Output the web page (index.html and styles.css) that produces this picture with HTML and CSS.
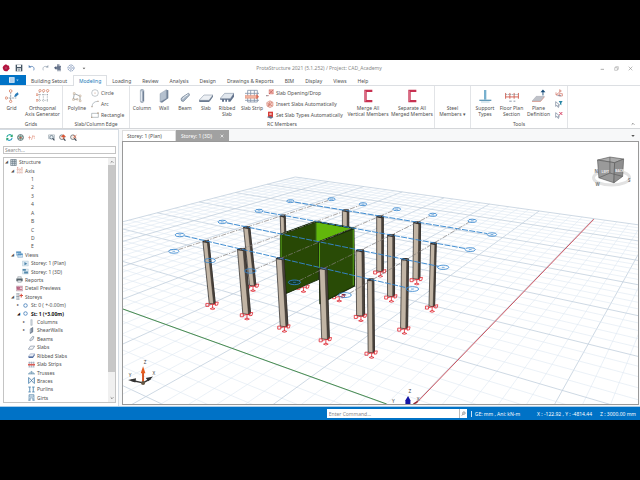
FILE: index.html
```html
<!DOCTYPE html>
<html lang="en">
<head>
<meta charset="utf-8">
<title>ProtaStructure 2021</title>
<link rel="stylesheet" href="styles.css">
</head>
<body>
<div class="app">
  <header class="titlebar">
    <div class="quick">
      <button aria-label="Application"><svg viewBox="0 0 24 24"><path fill="#b5123e" d="M12 1l4 3 5 1 1 6 1 3-4 4-3 4-5 0-5-2-3-5-1-5 3-5 4-3z"/><circle cx="12" cy="12" r="4" fill="#7c0828"/><path d="M12 8v8M8 12h8" stroke="#e0658b" stroke-width="2"/></svg></button>
      <button aria-label="Save"><svg viewBox="0 0 24 24"><path d="M2 2h20v20H2z" fill="#455564"/><path d="M6 2h12v7H6zM6 13h12v9H6z" fill="#f3f6f8"/><path d="M8 16h8M8 19h8" stroke="#455564" stroke-width="1.5"/></svg></button>
      <button aria-label="Undo"><svg viewBox="0 0 24 24"><path d="M6 9c7-5 15 1 11 10" fill="none" stroke="#5480b5" stroke-width="2.5"/><path d="M2 11V3l8 7z" fill="#5480b5"/></svg></button>
      <button aria-label="Redo"><svg viewBox="0 0 24 24"><path d="M18 9C11 4 3 10 7 19" fill="none" stroke="#9aa6b4" stroke-width="2.2"/><path d="M22 11V3l-8 7z" fill="#9aa6b4"/></svg></button>
      <button aria-label="Building"><svg viewBox="0 0 24 24"><path d="M9 3h8M9 8h12M10 17h10M12 2v20M18 5v17" fill="none" stroke="#52617c" stroke-width="2.5"/><path d="M0 11l7-5v4h12v4H7v4z" fill="#52617c"/></svg></button>
      <button aria-label="Settings"><svg viewBox="0 0 24 24"><circle cx="12" cy="12" r="9" fill="none" stroke="#7d93b6" stroke-width="3" stroke-dasharray="5 1.5"/><circle cx="12" cy="12" r="4" fill="none" stroke="#7d93b6" stroke-width="2"/></svg></button>
      <button aria-label="Customize"><svg viewBox="0 0 24 24"><path d="M8 11h8l-4 5z" fill="#555"/></svg></button>
    </div>
    <h1>ProtaStructure 2021 (5.1.252) / Project: CAD_Academy</h1>
    <div class="window">
      <button aria-label="Minimize"><svg viewBox="0 0 15 15"><path d="M2 10h10" stroke="#888" stroke-width="2"/></svg></button>
      <button aria-label="Restore"><svg viewBox="0 0 15 15"><path d="M2 5h8v8H2zM5 5V2h8v8h-3" fill="none" stroke="#999" stroke-width="1.5"/></svg></button>
      <button aria-label="Close"><svg viewBox="0 0 15 15"><path d="M2 2l11 11M13 2L2 13" stroke="#888" stroke-width="1.7"/></svg></button>
    </div>
  </header>

  <nav class="tabs">
    <button class="file" aria-label="File"><svg viewBox="0 0 30 20"><path d="M5 3h14v14H5z" fill="#e5f1fb"/><path d="M7 7h10M7 10h10M7 13h10" stroke="#5b9bd5" stroke-width="1.3"/><path d="M23 9h6l-3 4z" fill="#9cc8ee"/></svg></button>
    <button>Building Setout</button><button class="active">Modeling</button><button>Loading</button><button>Review</button><button>Analysis</button><button>Design</button><button>Drawings &amp; Reports</button><button>BIM</button><button>Display</button><button>Views</button><button>Help</button>
  </nav>

  <section class="ribbon">
    <div class="group">
      <div class="tools grids">
        <button><svg viewBox="0 0 42 42"><path d="M17 8v32M2 27h32" stroke="#6a7f90" stroke-width="2" stroke-dasharray="7 2"/><g fill="#fff" stroke="#dc8468" stroke-width="2.5"><circle cx="17" cy="6" r="4"/><circle cx="4" cy="27" r="3.5"/><circle cx="17" cy="37" r="3.5"/></g><path d="M27 23l4-8 7-5 3 6-8 7z" fill="#2b7cb9"/></svg><span>Grid</span></button>
        <button><svg viewBox="0 0 42 42"><path d="M10 8v30M22 8v30M34 8v30M4 17h34M4 34h34" stroke="#6d7b84" stroke-width="1.6" stroke-dasharray="4 3"/><g fill="#fff" stroke="#dc8468" stroke-width="2.4"><circle cx="12" cy="5" r="3.5"/><circle cx="23" cy="5" r="3.5"/><circle cx="35" cy="5" r="3.5"/><circle cx="3" cy="17" r="3"/><circle cx="3" cy="34" r="3"/></g></svg><span>Orthogonal<br>Axis Generator</span></button>
      </div>
      <h2>Grids</h2>
    </div>
    <div class="group">
      <div class="tools edges">
        <button><svg viewBox="0 0 42 42"><path d="M13 14l-3 17h13M13 14l17 7v16" fill="none" stroke="#75838d" stroke-width="2"/><g fill="#fff" stroke="#b69a7d" stroke-width="1.5"><path d="M10 11h5v5h-5zM8 29h5v5H8zM28 18h5v5h-5zM28 33h5v5h-5zM20 29h4v4h-4z"/></g></svg><span>Polyline</span></button>
        <div class="list">
          <button><svg viewBox="0 0 24 24"><circle cx="12" cy="12" r="10" fill="none" stroke="#8f9ba4" stroke-width="1.6"/><circle cx="12" cy="12" r="1.5" fill="#b87d61"/></svg>Circle</button>
          <button><svg viewBox="0 0 24 24"><path d="M3 20Q4 5 20 4" fill="none" stroke="#8f9ba4" stroke-width="1.8"/><path d="M1 18h4v4H1zM19 2h4v4h-4z" fill="#b9aa9b"/></svg>Arc</button>
          <button><svg viewBox="0 0 24 24"><path d="M2 7h20v12H2z" fill="none" stroke="#87939a" stroke-width="1.7"/><path d="M19 4h4v5h-4zM0 17h4v4H0z" fill="#bba58e"/></svg>Rectangle</button>
        </div>
      </div>
      <h2>Slab/Column Edge</h2>
    </div>
    <div class="group">
      <div class="tools members">
        <button><svg viewBox="0 0 42 42"><path d="M16 5q0-4 5-4t6 4v31q-1 5-6 5t-5-5z" fill="#aebac8" stroke="#68788b"/><path d="M19 7v29" stroke="#edf2f7" stroke-width="3"/><path d="M25 7v29" stroke="#69798e" stroke-width="3"/></svg><span>Column</span></button>
        <button><svg viewBox="0 0 42 42"><path d="M9 14L28 2v26L9 39z" fill="#b5c1cf" stroke="#718196"/><path d="M28 2l6 2v24L15 41l-6-2 19-11z" fill="#728399"/></svg><span>Wall</span></button>
        <button><svg viewBox="0 0 42 42"><path d="M9 30q1-4 8-8l14-9q4 0 3 6L17 37q-8 2-8-7z" fill="#a7b5c5" stroke="#68788c" stroke-width="2"/><path d="M13 31q3-7 18-15" fill="none" stroke="#eef3f8" stroke-width="3"/></svg><span>Beam</span></button>
        <button><svg viewBox="0 0 42 42"><path d="M0 34L15 18h27L30 34z" fill="#edf0f4" stroke="#758499" stroke-width="1.5"/><path d="M0 34h30v5H1zM30 34l12-16v5L31 39z" fill="#6c7b91"/></svg><span>Slab</span></button>
        <button><svg viewBox="0 0 42 42"><path d="M0 29L14 13h28L31 29z" fill="#e1e7ee" stroke="#718097" stroke-width="1.5"/><path d="M0 29h31l11-16v10L31 38h-6v-6h-4v6h-5v-6h-4v6H6v-6H1z" fill="#63738d"/></svg><span>Ribbed<br>Slab</span></button>
        <button><svg viewBox="0 0 42 42"><path d="M8 4h29v35H8zM17 4v35M28 4v35M0 13h42M0 34h42" fill="none" stroke="#8091a7" stroke-width="2.4"/><path d="M0 19h38v9H0z" fill="#f1b39f" stroke="#d77862"/><path d="M34 15l8 8-8 8z" fill="#d86b57"/></svg><span>Slab Strip</span></button>
        <div class="list">
          <button><svg viewBox="0 0 24 24"><path d="M9 2h13v13H9z" fill="#f4b1aa" stroke="#c7584f"/><path d="M9 15L22 2M11 4l9 9M2 20h7" stroke="#a4433e" stroke-width="1.4"/><path d="M1 18h3v4H1z" fill="#6e7780"/></svg>Slab Opening/Drop</button>
          <button><svg viewBox="0 0 24 24"><path d="M2 8l10-6 9 5v11l-9 5-9-5z" fill="#f4cdc4" stroke="#cd7565" stroke-width="1.5"/><path d="M5 10l14 8M12 5l-6 15M18 6L8 19" stroke="#c55d50" stroke-width="1.7"/></svg>Insert Slabs Automatically</button>
          <button><svg viewBox="0 0 24 24"><path d="M6 2h15v16H6z" fill="#d93d39"/><path d="M2 18l11-3 9 4-7 4z" fill="#65738a"/><path d="M10 6h7v6h-7z" fill="#eeb0a8"/></svg>Set Slab Types Automatically</button>
        </div>
        <button><svg viewBox="0 0 42 42"><path d="M34 2H10v38h24v-7H17V9h17z" fill="#c73151"/><path d="M13 5v32" stroke="#e79aaa" stroke-width="2"/></svg><span>Merge All<br>Vertical Members</span></button>
        <button><svg viewBox="0 0 42 42"><path d="M34 2H10v38h24v-7H17V9h17z" fill="#c73151"/><path d="M13 5v32" stroke="#e79aaa" stroke-width="2"/></svg><span>Separate All<br>Merged Members</span></button>
      </div>
      <h2>RC Members</h2>
    </div>
    <div class="group">
      <div class="tools steel"><button><svg viewBox="0 0 42 42"></svg><span>Steel<br>Members ▾</span></button></div>
      <h2>&nbsp;</h2>
    </div>
    <div class="group">
      <div class="tools misc">
        <button><svg viewBox="0 0 42 42"><path d="M18 3h7v29h-7z" fill="#77b0ce"/><path d="M4 32h36v4H4z" fill="#659bb9"/><path d="M9 39h26" stroke="#b8d3df" stroke-width="3"/></svg><span>Support<br>Types</span></button>
        <button><svg viewBox="0 0 46 42"><path d="M2 11v19M16 11v19M30 11v19M44 11v19M2 24h42" stroke="#d05d50" stroke-width="3"/><path d="M2 16h42" stroke="#7c858b" stroke-width="2" stroke-dasharray="5 2"/><path d="M14 38h8M28 38h6" stroke="#8290a5" stroke-width="3"/></svg><span>Floor Plan<br>Section</span></button>
        <button><svg viewBox="0 0 46 42"><path d="M0 38l14-16h27L28 38z" fill="#bfc2c9" stroke="#858b96"/><path d="M0 39h28l13-15" fill="none" stroke="#d98270" stroke-width="2"/><path d="M36 19V5" stroke="#174b78" stroke-width="3"/><path d="M28 9l8-9 8 9z" fill="#174b78"/></svg><span>Plane<br>Definition</span></button>
        <div class="list icons">
          <button aria-label="Rotate"><svg viewBox="0 0 24 24"><path d="M4 17l9-7M3 10v8h8M14 2l5 4-5 4zM13 14h9v7h-9z" fill="none" stroke="#cf6c5d" stroke-width="2"/><path d="M8 20h10" stroke="#5b789b" stroke-width="2"/></svg></button>
          <button aria-label="Filter"><svg viewBox="0 0 24 24"><path d="M2 5v14l4-3 3 6 3-1-3-6h5z" fill="#fff" stroke="#718096" stroke-width="2"/><path d="M11 3h12l-4 6v7l-4-3V9z" fill="#2786a5"/></svg></button>
          <button aria-label="Clear"><svg viewBox="0 0 24 24"><path d="M2 5v14l4-3 3 6 3-1-3-6h5z" fill="#fff" stroke="#718096" stroke-width="2"/><path d="M13 3l9 9M22 3l-9 9" stroke="#d74365" stroke-width="3"/></svg></button>
        </div>
      </div>
      <h2>Tools</h2>
    </div>
    <button class="collapse" aria-label="Collapse ribbon"><svg viewBox="0 0 12 12"><path d="M2 8l4-4 4 4" fill="none" stroke="#555" stroke-width="2"/></svg></button>
  </section>

  <main class="work">
    <aside class="side">
      <div class="sidebar-tools">
        <button aria-label="Refresh"><svg viewBox="0 0 24 24"><path d="M3 11C4 1 17 0 20 7" fill="none" stroke="#25a9a0" stroke-width="4"/><path d="M21 13c-1 10-14 11-17 4" fill="none" stroke="#2d9cc7" stroke-width="4"/><path d="M23 1v9h-9zM1 23v-9h9z" fill="#33a867"/></svg></button>
        <button aria-label="Globe"><svg viewBox="0 0 24 24"><circle cx="12" cy="12" r="10" fill="#dfece5" stroke="#55676f" stroke-width="3"/><path d="M12 3v18M3 9h18M3 15h18" stroke="#417863" stroke-width="1.8"/><path d="M8 10h8v5H8z" fill="#bc5b52"/></svg></button>
        <button aria-label="Sort"><svg viewBox="0 0 24 24"><path d="M5 6v13M1 12h9M12 20L17 4M18 8h6M20 14h4" stroke="#df8872" stroke-width="2.2"/></svg></button>
        <button class="apart" aria-label="Zoom window"><svg viewBox="0 0 24 24"><path d="M2 3h20v13H2z" fill="none" stroke="#8998a4" stroke-width="2"/><circle cx="12" cy="11" r="6" fill="#e9f0f5" stroke="#4e6677" stroke-width="2.5"/><path d="M16 15l6 7" stroke="#3d4c5a" stroke-width="4"/></svg></button>
        <button aria-label="Zoom in"><svg viewBox="0 0 24 24"><circle cx="10" cy="11" r="8" fill="#f5eee9" stroke="#59636c" stroke-width="2.5"/><path d="M15 15l7 8" stroke="#3d4650" stroke-width="4"/><path d="M15 3v14M9 9l6-6 7 6z" stroke="#da5534" stroke-width="3" fill="#da5534"/></svg></button>
        <button aria-label="Zoom clear"><svg viewBox="0 0 24 24"><circle cx="10" cy="11" r="8" fill="#f5eee9" stroke="#59636c" stroke-width="2.5"/><path d="M15 15l7 8" stroke="#3d4650" stroke-width="4"/><path d="M11 4l11 10M22 4L11 14" stroke="#dd7052" stroke-width="3"/></svg></button>
      </div>
      <input class="search" type="text" placeholder="Search..." aria-label="Search">
      <div class="tree">
        <ul>
          <li class="l1"><i>◢</i><svg viewBox="0 0 18 18"><path d="M2 1h14v16H2zM2 6h14M2 11h14M7 1v16M12 1v16" fill="#e3e9ee" stroke="#667582" stroke-width="1.8"/></svg>Structure</li>
          <li class="l2"><i>◢</i><svg viewBox="0 0 20 20"><path d="M5 4v15M11 4v15M17 4v15M2 7h17M2 15h17" stroke="#d08b79" stroke-width="1.7" stroke-dasharray="3 1.5"/><circle cx="5" cy="2" r="1.5" fill="#c8583f"/><circle cx="17" cy="2" r="1.5" fill="#c8583f"/></svg>Axis</li>
          <li class="l3"><i></i><b></b>1</li><li class="l3"><i></i><b></b>2</li><li class="l3"><i></i><b></b>3</li><li class="l3"><i></i><b></b>4</li>
          <li class="l3"><i></i><b></b>A</li><li class="l3"><i></i><b></b>B</li><li class="l3"><i></i><b></b>C</li><li class="l3"><i></i><b></b>D</li><li class="l3"><i></i><b></b>E</li>
          <li class="l2"><i>◢</i><svg viewBox="0 0 20 20"><path d="M1 2h13v10H1zM5 8h14v10H5z" fill="#cfe5f5" stroke="#6696bd" stroke-width="1.4"/><path d="M1 2h13v3H1zM5 8h14v3H5z" fill="#3c83b9"/></svg>Views</li>
          <li class="l3"><i></i><svg viewBox="0 0 20 20"><path d="M1 3h17v14H1z" fill="#dceaf3" stroke="#9bb3c6"/><path d="M7 6l8 5-8 4z" fill="#4c82a8"/></svg>Storey: 1 (Plan)</li>
          <li class="l3"><i></i><svg viewBox="0 0 20 20"><path d="M1 3h17v14H1z" fill="#dceaf3" stroke="#9bb3c6"/><path d="M2 3h9v5H2zM6 10h11v6H6z" fill="#5488aa"/></svg>Storey: 1 (3D)</li>
          <li class="l2"><i></i><svg viewBox="0 0 20 20"><path d="M1 7h18v8H1z" fill="#56636b"/><path d="M5 2h10v5H5zM5 12h10v6H5z" fill="#e5ebed" stroke="#56636b"/></svg>Reports</li>
          <li class="l2"><i></i><svg viewBox="0 0 20 20"><path d="M1 3h18v14H1z" fill="#edcdd5" stroke="#8b6f80"/><path d="M3 6h7v4H3zM12 6h5M3 13h14" stroke="#af496b" fill="#bc8ba6" stroke-width="2"/></svg>Detail Previews</li>
          <li class="l2"><i>◢</i><svg viewBox="0 0 20 20"><path d="M3 2v16M8 2v16M1 2h9M1 10h9M1 18h9" stroke="#778491" stroke-width="1.7"/><path d="M15 2v11M10 7h10" stroke="#d94e3f" stroke-width="3"/></svg>Storeys</li>
          <li class="l3"><i>▸</i><svg viewBox="0 0 20 20"><circle cx="10" cy="10" r="5" fill="none" stroke="#4d83bb" stroke-width="2.5"/></svg>St: 0 ( +-0.00m)</li>
          <li class="l3 strong"><i>◢</i><svg viewBox="0 0 20 20"><circle cx="10" cy="10" r="5" fill="none" stroke="#4d83bb" stroke-width="2.5"/></svg>St: 1 (+3.00m)</li>
          <li class="l4"><i>▸</i><svg viewBox="0 0 20 20"><path d="M8 2h4v16H8z" fill="#d9e0e7" stroke="#7b8896"/></svg>Columns</li>
          <li class="l4"><i>▸</i><svg viewBox="0 0 20 20"><path d="M6 6l8-5v13l-8 5z" fill="#738397" stroke="#56657a"/><path d="M8 6v9" stroke="#dce3ea" stroke-width="2"/></svg>ShearWalls</li>
          <li class="l4"><i></i><svg viewBox="0 0 20 20"><path d="M5 14l8-10 4 1-3 8-8 4z" fill="#e3e9ef" stroke="#67778c" stroke-width="1.6"/></svg>Beams</li>
          <li class="l4"><i></i><svg viewBox="0 0 20 20"><path d="M1 15L7 6h12l-6 9z" fill="#f6f8fa" stroke="#66778d" stroke-width="1.6"/></svg>Slabs</li>
          <li class="l4"><i></i><svg viewBox="0 0 20 20"><path d="M1 13L7 5h12l-5 8z" fill="#e6ebf3" stroke="#6074a0"/><path d="M1 13h13l5-8v5l-5 7H2z" fill="#526fa3"/></svg>Ribbed Slabs</li>
          <li class="l4"><i></i><svg viewBox="0 0 20 20"><path d="M4 2v16M10 2v16M16 2v16M1 4h18M1 17h18" stroke="#8397ae" stroke-width="1.5"/><path d="M0 8h20v5H0z" fill="#d85d56"/></svg>Slab Strips</li>
          <li class="l4"><i></i><svg viewBox="0 0 20 20"><path d="M1 14L10 7l9 7zM6 11v3M10 7v7M14 11v3" fill="none" stroke="#5e8caa" stroke-width="2"/></svg>Trusses</li>
          <li class="l4"><i></i><svg viewBox="0 0 20 20"><path d="M2 1v18M18 1v18" stroke="#5b8fb8" stroke-width="3"/><path d="M4 3l12 14M16 3L4 17" stroke="#3e6d96" stroke-width="2"/></svg>Braces</li>
          <li class="l4"><i></i><svg viewBox="0 0 20 20"><path d="M1 3h7M1 17h7M5 3v14M12 3h7M12 17h7M15 3v14" stroke="#4e86b1" stroke-width="2.5"/></svg>Purlins</li>
          <li class="l4"><i></i><svg viewBox="0 0 20 20"><path d="M3 18V2h14v16M3 6h14M6 18v-7h8v7M1 18h6M13 18h6" fill="none" stroke="#5184aa" stroke-width="2"/></svg>Girts</li>
        </ul>
        <div class="scroll"><button aria-label="Scroll up"><svg viewBox="0 0 12 12"><path d="M2 8l4-4 4 4" fill="none" stroke="#555" stroke-width="2"/></svg></button><div class="thumb"></div><button aria-label="Scroll down"><svg viewBox="0 0 12 12"><path d="M2 4l4 4 4-4" fill="none" stroke="#555" stroke-width="2"/></svg></button></div>
      </div>
    </aside>

    <section class="documents">
      <div class="doc-tabs">
        <button>Storey: 1 (Plan)</button>
        <button class="current"><span>Storey: 1 (3D)</span><svg viewBox="0 0 12 12"><path d="M2 2l8 8M10 2l-8 8" stroke="#fff" stroke-width="2"/></svg></button>
        <button class="more" aria-label="More documents"><svg viewBox="0 0 12 12"><path d="M1 3h10L6 9z" fill="#555"/></svg></button>
      </div>
      <div class="viewport">
        <svg id="scene" viewBox="9 39 1545 784" preserveAspectRatio="xMidYMid slice" role="img" aria-label="3D structure view">
          <g id="mesh"></g>
          <path d="M6 537L800 823" stroke="#338038" stroke-width="2.6"/>
          <path d="M1420 270L886 823" stroke="#c83b48" stroke-width="2.6"/>
          <g id="far"></g>
          <g stroke="#162808" stroke-width="3" stroke-linejoin="round">
            <path fill="#62b70b" d="M588 277L702 297L597 338L588 335z"/>
            <path fill="#284805" d="M482 316L588 277V336L597 338V450L500 492L482 455z"/>
            <path fill="#294b06" d="M597 338L702 297L704 470L600 523z"/>
          </g>
          <path d="M484 317V400M589 279V335M599 341V420M700 300V468" stroke="#59a719" stroke-width="3"/>
          <path d="M482 316L588 277L702 297L597 338" fill="none" stroke="#192c0b" stroke-width="5"/>
          <ellipse cx="524" cy="459" rx="18" ry="8" fill="#143c26"/>
          <g id="near"></g>
          <g id="axes" fill="none"></g>
          <g stroke-width="4">
            <path d="M71 758V720" stroke="#d65320" stroke-width="6"/><path d="M64 731L71 710L78 731z" fill="#e55a1b"/>
            <path d="M71 760L35 752M71 760L94 747" stroke="#343434"/><path d="M26 751L50 746L48 759zM101 741L79 745L87 755z" fill="#333"/><circle cx="71" cy="760" r="6" fill="#655744"/>
            <path d="M856 823V812L864 799L871 812V823z" fill="#1515a5"/><path d="M880 823L893 815" stroke="#8b2631"/>
          </g>
          <g class="axis-label"><text x="73" y="704">Z</text><text x="28" y="743">Y</text><text x="99" y="737">X</text><text x="865" y="791">Z</text><text x="816" y="821">Y</text><text x="890" y="814">X</text></g>
          <ellipse cx="1473" cy="146" rx="54" ry="22" fill="none" stroke="#e2e2e2" stroke-width="9"/>
          <g stroke="#5c5c5c" stroke-width="2"><path fill="#ababab" d="M1431 93L1468 84L1509 90L1482 101z"/><path fill="#9a9a9a" d="M1431 93L1482 101L1480 161L1435 146z"/><path fill="#8f8f8f" d="M1482 101L1509 90L1506 142L1480 161z"/><path fill="none" d="M1468 84V132L1435 146M1468 132L1506 142"/></g>
          <g class="cube-label"><text x="1443" y="132">LEFT</text><text x="1484" y="130">BACK</text></g>
          <g class="compass"><text x="1425" y="172">W</text><text x="1522" y="160">S</text><text x="1422" y="132">N</text></g>
        </svg>
      </div>
    </section>
  </main>

  <footer class="status">
    <div class="command"><input type="text" placeholder="Enter Command..." aria-label="Command"><button aria-label="Run command"><svg viewBox="0 0 12 12"><circle cx="7" cy="5" r="3" fill="none" stroke="#666" stroke-width="1.5"/><path d="M5 7l-3 4" stroke="#666" stroke-width="1.5"/></svg></button></div>
    <span class="units">GE: mm , Ani: kN-m</span><span class="xy">X : -122.92 , Y : -4814.44</span><span class="z">Z : 3000.00 mm</span>
  </footer>
</div>
<script src="scene.js"></script>
</body>
</html>
```

FILE: styles.css
```css
* { box-sizing: border-box; }
body { margin: 0; background: #000; font: 5px/6px "Noto Sans", sans-serif; color: #505050; }
button { border: 0; padding: 0; margin: 0; background: none; font: inherit; color: inherit; }
input { font: inherit; min-width: 0; border-radius: 0; }
input::placeholder { color: #888; }
svg { display: block; flex: none; }
h1, h2 { margin: 0; font: inherit; }
ul { list-style: none; margin: 0; padding: 0; }

.app { display: flex; flex-direction: column; min-height: 100vh; border: solid #000; border-width: 60px 0; background: #fff; }

.titlebar { display: grid; grid-template-columns: 1fr auto 1fr; align-items: center; height: 15px; padding: 1px 4px 0 2px; }
.titlebar h1 { color: #888; }
.quick { display: flex; gap: 5px; }
.quick svg { width: 8px; height: 8px; }
.window { display: flex; justify-content: flex-end; gap: 9px; padding-right: 3px; }
.window svg { width: 5px; height: 5px; }

.tabs { display: flex; height: 11px; border-bottom: 1px solid #dcdfe3; }
.tabs button { padding: 1px 6px 0 5px; }
.tabs .file { width: 26px; padding: 0 7px; background: #0072c6; }
.file svg { width: 12px; height: 8px; }
.tabs .active { color: #1979b8; background: #fff; border: 1px solid #dcdfe3; border-bottom: 0; padding: 0 5px; margin-bottom: -1px; }

.ribbon { display: flex; height: 43px; border-bottom: 1px solid #d4d6d9; }
.group { display: flex; flex-direction: column; justify-content: space-between; border-right: 1px solid #e2e4e7; padding-bottom: 1px; }
.group h2 { text-align: center; }
.tools { display: grid; align-items: start; }
.tools > button { display: flex; flex-direction: column; align-items: center; gap: 2px; padding-top: 3px; white-space: nowrap; }
.tools > button > svg { width: 14px; height: 14px; }
.tools > button > span { text-align: center; }
.grids { grid-template-columns: 23px 39px; }
.edges { grid-template-columns: 28px 38px; }
.members { grid-template-columns: 24px 20px 22px 20px 22px 28px 80px 44px 44px; }
.steel { grid-template-columns: 35px; }
.misc { grid-template-columns: 28px 25px 29px 14px; }
.list { display: grid; grid-auto-rows: 11px; padding-top: 1px; }
.list button { display: flex; align-items: center; gap: 2px; white-space: nowrap; }
.list svg { width: 8px; height: 8px; }
.icons { padding-left: 2px; }
.collapse { margin-left: auto; align-self: flex-end; padding: 0 5px 2px 0; }
.collapse svg, .more svg { width: 4px; height: 4px; }

.work { flex: 1; display: flex; background: #f7f8f9; }
.side { width: 119px; flex: none; display: flex; flex-direction: column; gap: 3px; padding: 1px 2px 3px 3px; border: 1px solid #d5dce3; border-width: 1px 1px 0 0; background: #fff; }
.sidebar-tools { display: flex; gap: 4px; height: 12px; align-items: center; padding-left: 3px; }
.sidebar-tools svg { width: 7px; height: 7px; }
.sidebar-tools .apart { margin-left: 9px; }
.search { width: 100%; height: 8px; border: 1px solid #c4c4c4; padding: 0 1px; }
.tree { flex: 1; display: flex; border: 1px solid #c4c4c4; }
.tree ul { flex: 1; display: grid; grid-auto-rows: 1fr; }
.tree li { display: flex; align-items: center; white-space: nowrap; }
.tree li i { width: 5px; flex: none; font: 4px/6px "DejaVu Sans", sans-serif; }
.tree li svg, .tree li b { width: 7px; height: 7px; flex: none; margin-right: 2px; }
.l1 { padding-left: 1px; }
.l2 { padding-left: 7px; }
.l3 { padding-left: 13px; }
.l4 { padding-left: 19px; }
.strong { font-weight: bold; color: #111; }
.scroll { width: 7px; display: grid; grid-template-rows: 7px 7fr 1fr; background: #f0f0f0; }
.scroll svg { width: 4px; height: 4px; margin: 0 auto; }
.scroll .thumb { background: #c7c7c7; }
.scroll button:last-child { align-self: end; padding-bottom: 2px; }

.documents { flex: 1; display: flex; flex-direction: column; padding: 1px 1px 1px 3px; }
.doc-tabs { display: flex; height: 11px; align-items: stretch; }
.doc-tabs button { width: 54px; padding: 0 4px; text-align: left; background: #fff; border: 1px solid #ddd; border-bottom: 0; }
.doc-tabs .current { display: flex; align-items: center; justify-content: space-between; width: 53px; background: #a1a1a1; border-color: #a1a1a1; color: #fff; }
.current svg { width: 4px; height: 4px; }
.doc-tabs .more { width: auto; margin-left: auto; background: none; border: 0; }
.viewport { flex: 1; min-height: 120px; border: 1px solid #999; background: #fff; overflow: hidden; display: flex; }
#scene { width: 100%; height: auto; flex: 1; }
.axis-label { font-size: 14px; fill: #444; }
.cube-label { font-size: 10px; font-weight: bold; fill: #eee; }
.compass { font-size: 13px; font-weight: bold; fill: #777; }

.status { display: flex; align-items: center; justify-content: flex-end; height: 14px; padding-right: 4px; background: #0072c6; border-top: 1px solid #a9cdea; color: #fff; }
.command { display: flex; width: 140px; height: 9px; margin-right: 4px; background: #fff; }
.command input { flex: 1; border: 0; padding: 0 2px; }
.command button { width: 8px; border-left: 1px solid #bbb; }
.command svg { width: 5px; height: 5px; margin: 0 auto; }
.status span { white-space: nowrap; }
.units { border-left: 1px solid #cce3f4; padding-left: 3px; margin-right: 17px; }
.xy { margin-right: 8px; }
```

FILE: scene.js
```js
const ns = 'http://www.w3.org/2000/svg';
function add(parent, tag, attrs) {
  const el = document.createElementNS(ns, tag);
  for (const k in attrs) el.setAttribute(k, attrs[k]);
  document.getElementById(parent).appendChild(el);
}

// Ground mesh in perspective: origin and the two vanishing points.
const O = [861, 846], VA = [1878, -207], VB = [-2097, -222];
const A = 1.216 / 35, B = 0.754 / 35;
function project(u, v) {
  const w = 1 + A * u + B * v;
  return [0, 1].map(i => ((O[i] + A * u * VA[i] + B * v * VB[i]) / w).toFixed(1));
}
function meshLine(p, q, major) {
  add('mesh', 'path', {
    d: 'M' + project(...p) + 'L' + project(...q),
    stroke: major ? '#c2cfdd' : '#dde8f2',
    'stroke-width': major ? 2.4 : 1.8
  });
}
for (let n = -35; n <= 35; n++) {
  const minV = Math.max(-35, (-0.85 - A * n) / B);
  const minU = Math.max(-35, (-0.85 - B * n) / A);
  meshLine([n, minV], [n, 35], n % 5 === 0);
  meshLine([minU, n], [35, n], n % 5 === 0);
}

function support(layer, x, y) {
  add(layer, 'path', {
    d: `M${x - 19} ${y - 2}h9v9h-9zM${x + 10} ${y - 5}l8-1-2 9-7 1zM${x - 10} ${y + 3}l11-3 9 1M${x + 1} ${y}v13M${x - 6} ${y + 14}q7-6 14 0q-7 5-14 0z`,
    fill: 'none', stroke: '#e0262f', 'stroke-width': 2.4
  });
}
function column(layer, x1, y1, x2, y2, w, foot = true) {
  const h = w / 2, s = w * 0.24;
  add(layer, 'path', { d: `M${x1 - h} ${y1}L${x1 + h} ${y1}L${x2 + h} ${y2 - 2}L${x2 + s} ${y2 + 2}L${x2 - h} ${y2}z`, fill: '#c2b5a5', stroke: '#1d1a18', 'stroke-width': 2 });
  add(layer, 'path', { d: `M${x1 + s} ${y1 + 4}L${x1 + h} ${y1}L${x2 + h} ${y2 - 2}L${x2 + s} ${y2 + 2}z`, fill: '#4d463f', stroke: '#1d1a18', 'stroke-width': 1.3 });
  add(layer, 'path', { d: `M${x1 - h} ${y1}L${x1 - h + 4} ${y1 - 4}H${x1 + h}V${y1 + 2}L${x1 + s} ${y1 + 5}L${x1 - h} ${y1 + 3}z`, fill: '#34302d' });
  if (foot) support(layer, x2, y2 + 2);
}
column('far', 489, 260, 491, 330, 15, false);
column('far', 677, 244, 677, 310, 19, false);
support('far', 550, 473);
support('far', 657, 501);
[
  [780, 262, 780, 425, 20], [891, 280, 889, 448, 21], [813, 318, 813, 500, 21],
  [940, 342, 935, 530, 17], [381, 294, 399, 468, 19], [259, 336, 278, 522, 18],
  [365, 360, 381, 553, 23], [720, 364, 722, 558, 24], [481, 387, 493, 590, 23],
  [855, 390, 852, 596, 21], [610, 417, 617, 628, 23], [752, 451, 754, 668, 19]
].forEach(c => column('near', ...c));
add('near', 'path', { d: 'M664 494h14l-6 6z', fill: '#8c2634' });

// Storey axes with their bubbles.
const ends = (x1, y1, x2, y2) => [[x1, y1], [x2, y2]].forEach(([x, y]) => {
  const r = 11 + (y - 210) / 35;
  add('axes', 'ellipse', { cx: x, cy: y, rx: r, ry: r * 0.38, stroke: '#3586cf', 'stroke-width': 2.5 });
  add('axes', 'path', { d: `M${x - 4} ${y}h8`, stroke: '#3586cf', 'stroke-width': 2 });
});
[[181, 317, 877, 479], [308, 278, 969, 414], [418, 245, 1050, 361], [512, 216, 1115, 316]].forEach(l => {
  add('axes', 'path', { d: `M${l[0] + 14} ${l[1] + 3}L${l[2] - 14} ${l[3] - 3}`, stroke: '#3586cf', 'stroke-width': 2.8, 'stroke-dasharray': '18 4' });
  ends(...l);
});
[[163, 366, 635, 210], [271, 394, 729, 225], [392, 425, 830, 240], [524, 459, 938, 257], [675, 497, 1056, 275]].forEach(l => {
  add('axes', 'path', { d: `M${l[0] + 14} ${l[1] - 5}L${l[2] - 10} ${l[3] + 4}`, stroke: '#857f7c', 'stroke-width': 2.1, 'stroke-dasharray': '15 4 4 4' });
  ends(...l);
});
```
